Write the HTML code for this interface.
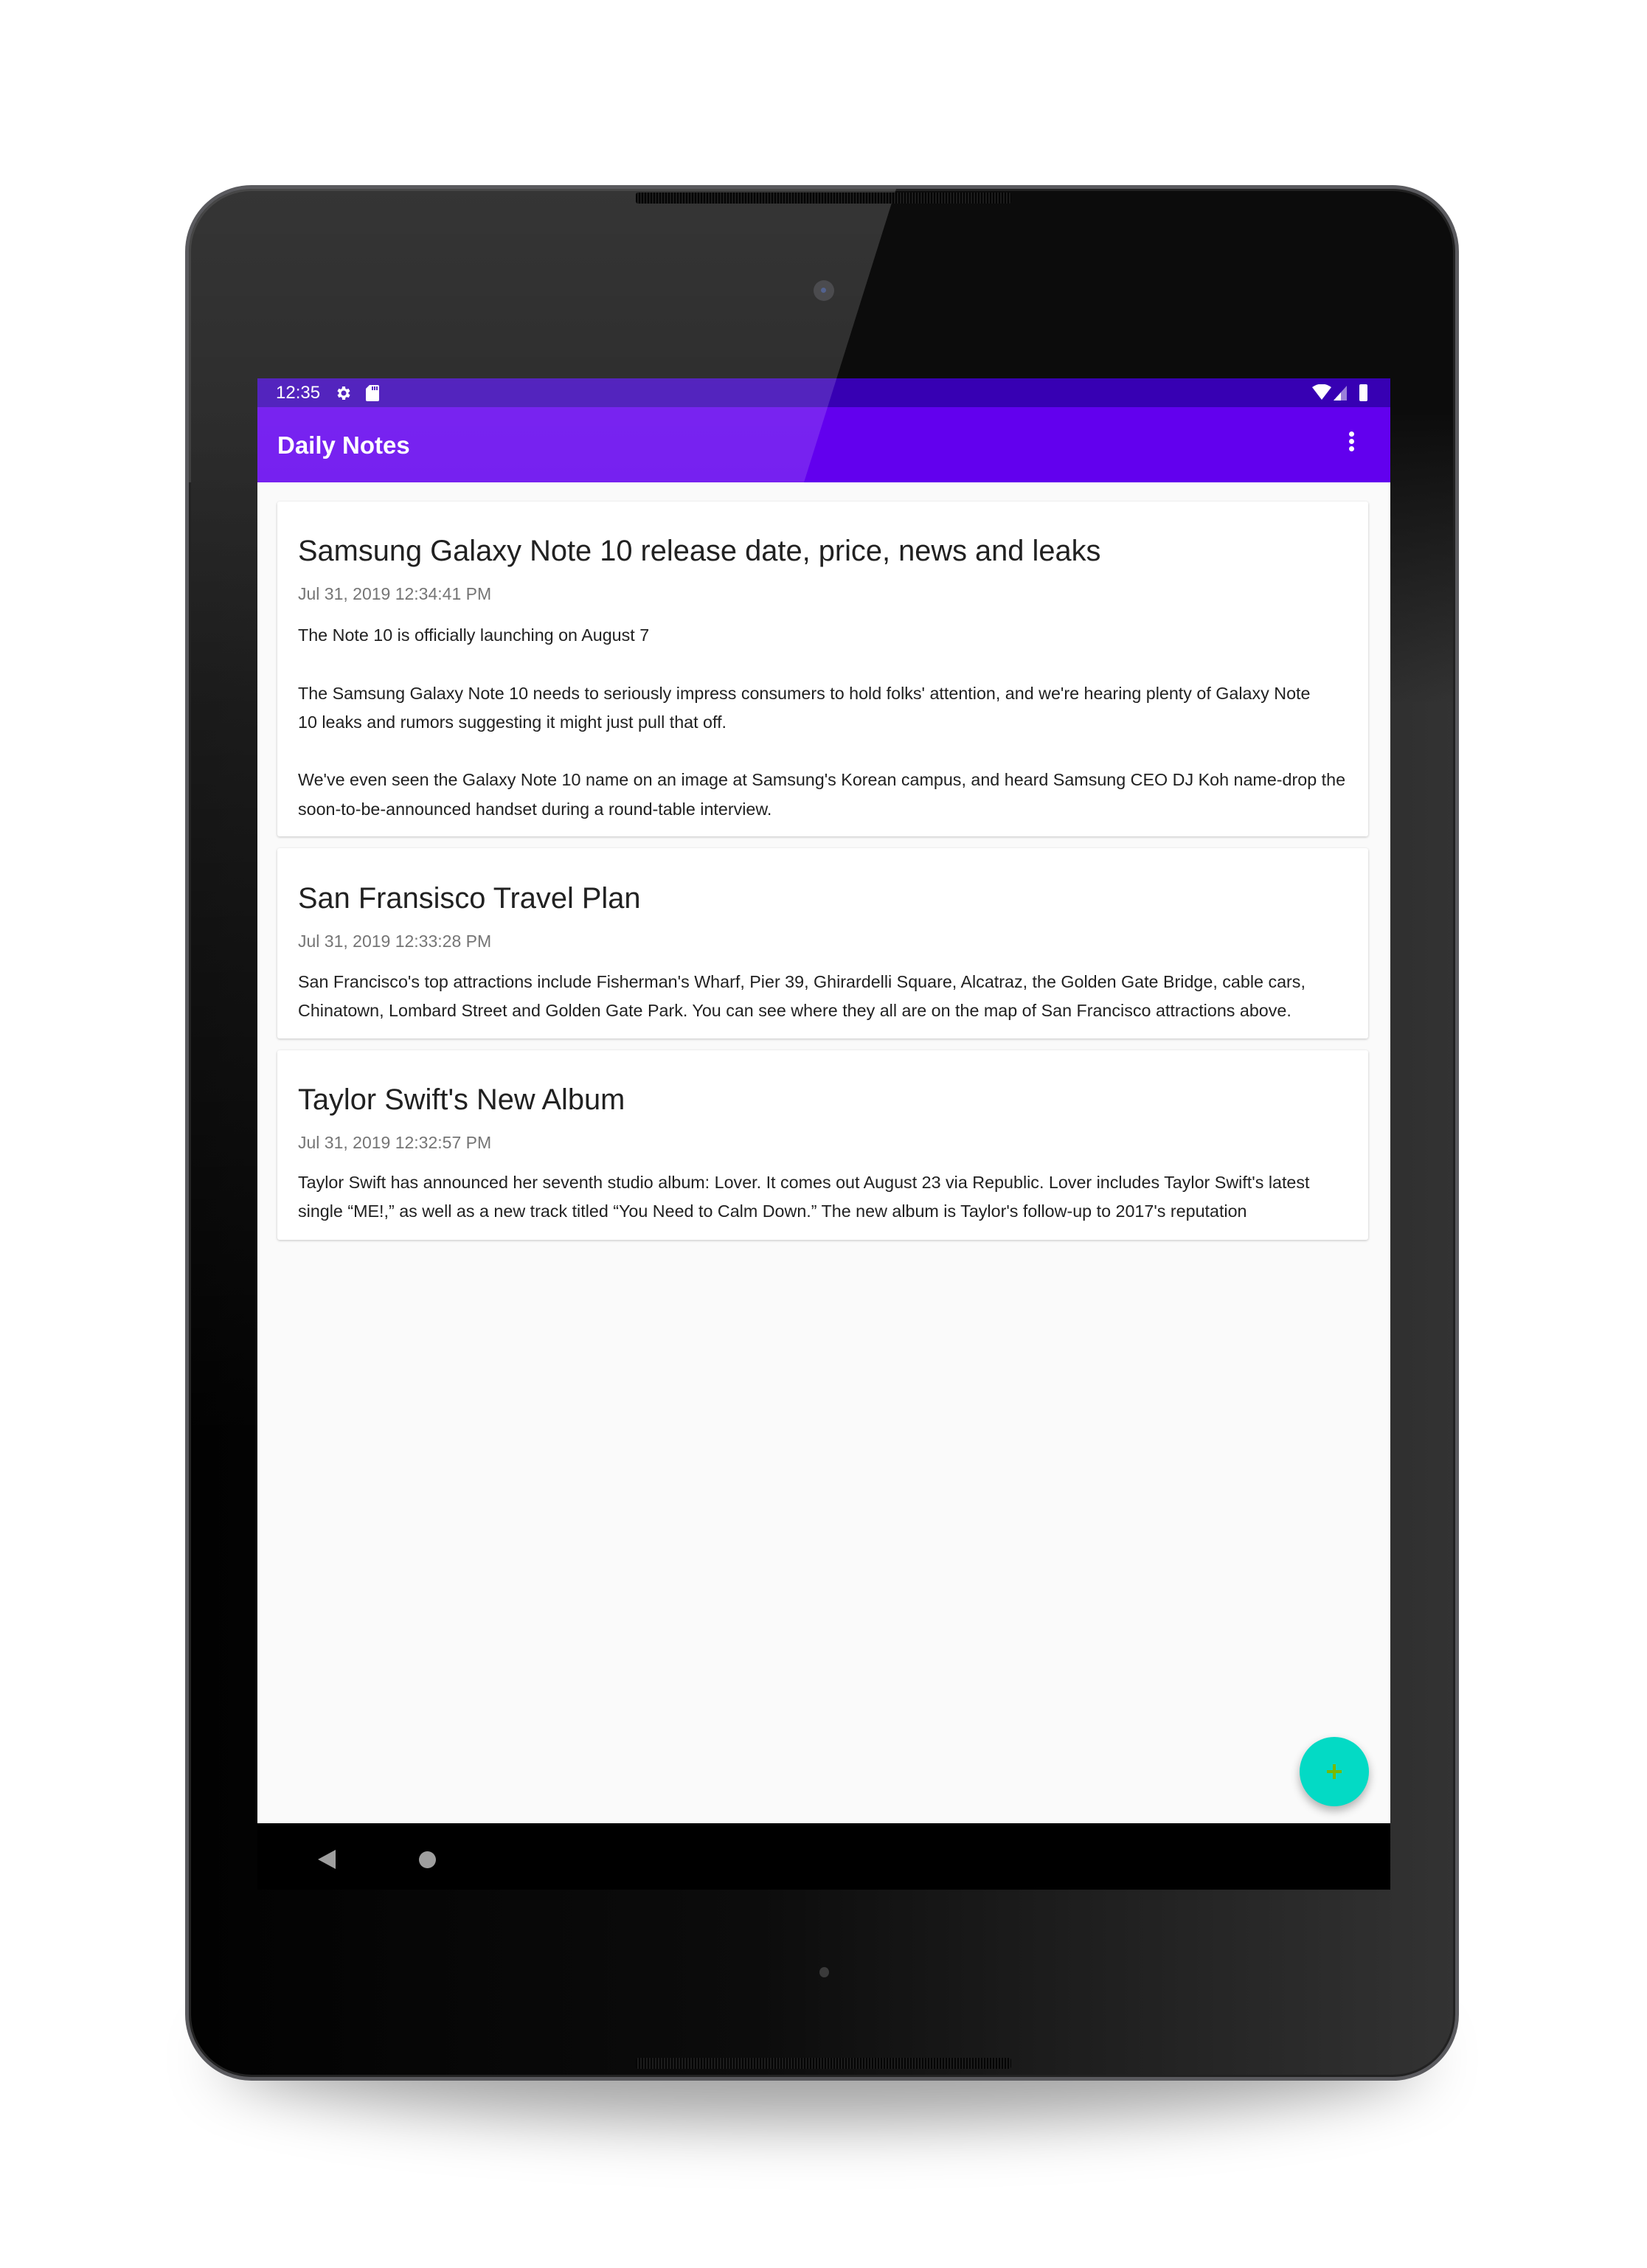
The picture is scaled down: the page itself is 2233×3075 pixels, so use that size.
<!DOCTYPE html>
<html><head><meta charset="utf-8"><style>
*{margin:0;padding:0;box-sizing:border-box}
body{width:2233px;height:3075px;background:#fff;position:relative;overflow:hidden;font-family:"Liberation Sans",sans-serif}
.abs{position:absolute}
.shadow{left:300px;top:2700px;width:1630px;height:180px;border-radius:50%;background:rgba(0,0,0,0.35);filter:blur(40px)}
.dev{left:251px;top:251px;width:1727px;height:2570px;border-radius:90px;background:linear-gradient(to bottom,#0c0c0c 0px,#0c0c0c 300px,rgba(12,12,12,0) 700px),linear-gradient(to right,#020202 0%,#0c0c0c 45%,#333 100%);border:5px solid #5a5a5e;box-shadow:inset 0 0 0 3px #222}
.glare{left:256px;top:256px;width:1717px;height:398px;clip-path:polygon(0 0,959px 0,834px 398px,0 398px);background:linear-gradient(to bottom,rgba(255,255,255,0.17),rgba(255,255,255,0.13));border-top-left-radius:85px;z-index:5}
.strip{left:259px;top:654px;width:90px;height:1300px;background:linear-gradient(to bottom,rgba(255,255,255,0.13),rgba(255,255,255,0.06) 50%,rgba(255,255,255,0));z-index:5}
.grille{left:862px;height:15px;width:509px;background:repeating-linear-gradient(90deg,#050505 0 2px,#1c1c1c 2px 4px);border-radius:3px;z-index:6}
.screen{left:349px;top:513px;width:1536px;height:2049px;background:#fafafa;overflow:hidden;z-index:4}
.sb{left:0;top:0;width:1536px;height:39px;background:#3700b3;color:#fff}
.tb{left:0;top:39px;width:1536px;height:102px;background:#6200ee;color:#fff}
.card{left:27px;width:1479px;background:#fff;box-shadow:0 1px 3px rgba(0,0,0,0.22);border-radius:3px}
.t{position:absolute;left:28px;font-size:39.8px;color:#212121;white-space:nowrap;line-height:46px}
.d{position:absolute;left:28px;font-size:23px;color:#757575;white-space:nowrap;line-height:30px}
.b{position:absolute;left:28px;font-size:23.3px;color:#212121;white-space:nowrap;line-height:39.3px}
.nav{left:0;top:1959px;width:1536px;height:90px;background:#000}
</style></head><body>
<div class="abs shadow"></div>
<div class="abs dev"></div>
<div class="abs grille" style="top:261px"></div>
<div class="abs grille" style="top:2790px"></div>
<div class="abs" style="left:1103px;top:380px;width:28px;height:28px;border-radius:50%;background:#2a2a2e"></div>
<div class="abs" style="left:1113px;top:390px;width:7px;height:7px;border-radius:50%;background:#33457a"></div>
<div class="abs" style="left:1111px;top:2667px;width:13px;height:14px;border-radius:50%;background:#3a3a3a"></div>
<div class="abs strip"></div>
<div class="abs screen">
 <div class="abs sb">
  <div class="abs" style="left:25px;top:6px;font-size:24px;line-height:28px">12:35</div>
  <svg class="abs" style="left:104px;top:8px" width="24" height="24" viewBox="0 0 24 24"><path fill="#fff" d="M19.4 13a7.5 7.5 0 000-2l2.1-1.6-2-3.5-2.5 1a7.3 7.3 0 00-1.7-1L15 3h-4l-.4 2.9a7.3 7.3 0 00-1.7 1l-2.5-1-2 3.5L6.6 11a7.5 7.5 0 000 2l-2.1 1.6 2 3.5 2.5-1a7.3 7.3 0 001.7 1L11 21h4l.4-2.9a7.3 7.3 0 001.7-1l2.5 1 2-3.5zM13 15.5a3.5 3.5 0 110-7 3.5 3.5 0 010 7z"/></svg>
  <svg class="abs" style="left:146px;top:8px" width="20" height="24" viewBox="0 0 20 24"><path fill="#fff" d="M6 1h11a2 2 0 012 2v18a2 2 0 01-2 2H3a2 2 0 01-2-2V6z"/><path fill="#3700b3" d="M9 3h2v5H9zM12 3h2v5h-2zM15 3h2v5h-2z"/></svg>
  <svg class="abs" style="left:1430px;top:8px" width="26" height="22" viewBox="0 0 26 22"><path fill="#fff" d="M13 21L0 4Q13-5 26 4z"/></svg>
  <svg class="abs" style="left:1459px;top:10px" width="18" height="20" viewBox="0 0 18 20"><path fill="#fff" d="M18 0v20H0z" opacity=".5"/><path fill="#fff" d="M10 9v11H0z"/></svg>
  <div class="abs" style="left:1494px;top:8px;width:11px;height:23px;background:#fff;border-radius:2px"></div>
 </div>
 <div class="abs tb">
  <div class="abs" style="left:27px;top:33px;font-size:33px;font-weight:bold;line-height:38px">Daily Notes</div>
  <div class="abs" style="left:1480px;top:33px;width:7px;height:7px;border-radius:50%;background:#fff"></div>
  <div class="abs" style="left:1480px;top:43px;width:7px;height:7px;border-radius:50%;background:#fff"></div>
  <div class="abs" style="left:1480px;top:53px;width:7px;height:7px;border-radius:50%;background:#fff"></div>
 </div>
 <div class="abs card" style="top:167px;height:454px">
  <div class="t" style="top:44px">Samsung Galaxy Note 10 release date, price, news and leaks</div>
  <div class="d" style="top:110px">Jul 31, 2019 12:34:41 PM</div>
  <div class="b" style="top:162px">The Note 10 is officially launching on August 7<br><br>The Samsung Galaxy Note 10 needs to seriously impress consumers to hold folks' attention, and we're hearing plenty of Galaxy Note<br>10 leaks and rumors suggesting it might just pull that off.<br><br>We've even seen the Galaxy Note 10 name on an image at Samsung's Korean campus, and heard Samsung CEO DJ Koh name-drop the<br>soon-to-be-announced handset during a round-table interview.</div>
 </div>
 <div class="abs card" style="top:637px;height:258px">
  <div class="t" style="top:45px">San Fransisco Travel Plan</div>
  <div class="d" style="top:111px">Jul 31, 2019 12:33:28 PM</div>
  <div class="b" style="top:162px">San Francisco's top attractions include Fisherman's Wharf, Pier 39, Ghirardelli Square, Alcatraz, the Golden Gate Bridge, cable cars,<br>Chinatown, Lombard Street and Golden Gate Park. You can see where they all are on the map of San Francisco attractions above.</div>
 </div>
 <div class="abs card" style="top:911px;height:257px">
  <div class="t" style="top:44px">Taylor Swift's New Album</div>
  <div class="d" style="top:110px">Jul 31, 2019 12:32:57 PM</div>
  <div class="b" style="top:160px">Taylor Swift has announced her seventh studio album: Lover. It comes out August 23 via Republic. Lover includes Taylor Swift's latest<br>single “ME!,” as well as a new track titled “You Need to Calm Down.” The new album is Taylor's follow-up to 2017's reputation</div>
 </div>
 <div class="abs" style="left:1413px;top:1842px;width:94px;height:94px;border-radius:50%;background:#03dac5;box-shadow:0 6px 12px rgba(0,0,0,0.3)"></div>
 <div class="abs" style="left:1458px;top:1879px;width:4px;height:20px;background:#7ab800"></div>
 <div class="abs" style="left:1450px;top:1887px;width:20px;height:4px;background:#7ab800"></div>
 <div class="abs nav">
  <svg class="abs" style="left:82px;top:36px" width="24" height="26" viewBox="0 0 24 26"><path fill="#9e9e9e" d="M24 0v26L0 13z"/></svg>
  <div class="abs" style="left:219px;top:38px;width:23px;height:23px;border-radius:50%;background:#9e9e9e"></div>
 </div>
</div>
<div class="abs glare"></div>
</body></html>
